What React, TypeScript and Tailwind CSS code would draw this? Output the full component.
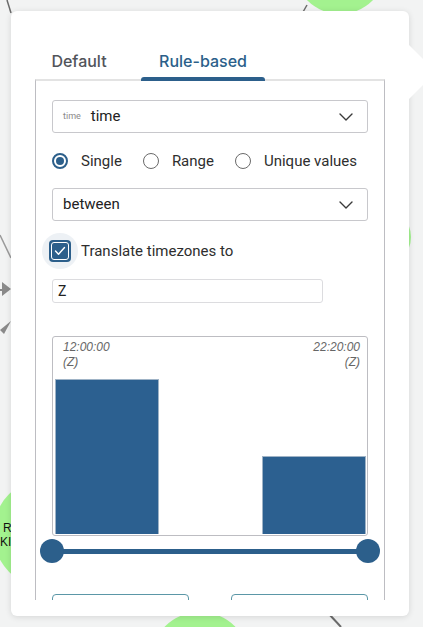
import React from 'react';

const GraphBackdrop = () => (
  <svg className="absolute inset-0" width={423} height={627} viewBox="0 0 423 627">
    {/* edges */}
    <line x1={7} y1={0} x2={11} y2={13} stroke="#6b6b6b" strokeWidth={1.5} />
    <line x1={307} y1={5} x2={303} y2={12} stroke="#6b6b6b" strokeWidth={1.5} />
    <line x1={0} y1={235} x2={11} y2={258} stroke="#9a9a9a" strokeWidth={1.5} />
    <line x1={0} y1={290} x2={6} y2={290} stroke="#8a8a8a" strokeWidth={2} />
    <polygon points="2,282 11,289 2,296" fill="#8a8a8a" />
    <polygon points="0,330 11,321 4,334" fill="#8a8a8a" />
    <line x1={329} y1={614} x2={341} y2={627} stroke="#6b6b6b" strokeWidth={2} />
    {/* nodes */}
    <circle cx={340} cy={-32} r={46} fill="#a3f28f" />
    <circle cx={48} cy={533} r={55} fill="#a3f28f" />
    <circle cx={381} cy={237} r={30} fill="#a3f28f" />
    <circle cx={200} cy={662} r={50} fill="#a3f28f" />
    <text x={3} y={532} fontSize={12} fontFamily="Liberation Sans, sans-serif" fill="#111">R</text>
    <text x={0} y={546} fontSize={12} fontFamily="Liberation Sans, sans-serif" fill="#111">KI</text>
  </svg>
);

const Chevron = () => (
  <svg width={14} height={8} viewBox="0 0 14 8" fill="none">
    <polyline points="1,1 7,7 13,1" stroke="#3a3a3a" strokeWidth={1.4} strokeLinecap="round" strokeLinejoin="round" />
  </svg>
);

const Radio = ({ checked, label }: { checked?: boolean; label: string }) => (
  <label className="flex items-center gap-[13px] whitespace-nowrap">
    {checked ? (
      <span className="w-4 h-4 rounded-full border-2 border-[#2c5f8b] flex items-center justify-center">
        <span className="w-[8px] h-[8px] rounded-full bg-[#2c5f8b]" />
      </span>
    ) : (
      <span className="w-4 h-4 rounded-full border border-[#6a6a6a]" />
    )}
    <span className="text-[15px] text-[#2e2e2e] leading-6">{label}</span>
  </label>
);

const bins = [2, 0, 1];

const App = () => {
  const maxBin = Math.max(...bins);

  return (
    <div className="relative w-[423px] h-[627px] overflow-hidden bg-[#f2f3f3] font-['Roboto','Noto_Sans',sans-serif]">
      <GraphBackdrop />

      {/* Popover panel */}
      <div className="absolute left-[11px] top-[11px] w-[398px] h-[605px] bg-white rounded-[6px] shadow-[0_1px_6px_rgba(0,0,0,0.12)] flex flex-col">
        {/* popover pointer */}
        <svg className="absolute left-[397px] top-[33px]" width={30} height={58} viewBox="0 0 30 58">
          <polygon points="0,0 28,28 0,56" fill="#ffffff" />
        </svg>

        {/* Tabs */}
        <div className="h-[68px] flex items-end pl-[6px] font-['Inter',sans-serif]">
          <button className="w-[124px] h-[30px] text-[16px] font-medium text-[#51545a] leading-6 pb-[6px]">
            Default
          </button>
          <button className="relative w-[124px] h-[30px] text-[16px] font-medium text-[#2b5f8a] leading-6 pb-[6px]">
            Rule-based
            <span className="absolute left-0 right-0 -bottom-[2px] h-[4px] rounded-t-[3px] bg-[#2c5f8b] z-10" />
          </button>
        </div>

        {/* Tab content */}
        <div className="mx-6 h-[521px] border-x border-[#bdbdc2] border-t-2 border-t-[#e3e3e3] overflow-hidden px-4 pt-[19px]">
          {/* field select */}
          <div className="h-[33px] border border-[#c8c8cc] rounded-[3px] flex items-center pl-[10px] pr-[14px]">
            <span className="text-[9px] text-[#8a8a8a] mr-[10px]">time</span>
            <span className="text-[15px] text-[#222]">time</span>
            <span className="ml-auto">
              <Chevron />
            </span>
          </div>

          {/* mode radios */}
          <div className="mt-4 h-6 flex items-center gap-[21px]">
            <Radio checked label="Single" />
            <Radio label="Range" />
            <Radio label="Unique values" />
          </div>

          {/* operator select */}
          <div className="mt-[15px] h-[33px] border border-[#c8c8cc] rounded-[3px] flex items-center pl-[10px] pr-[14px]">
            <span className="text-[15px] text-[#222]">between</span>
            <span className="ml-auto">
              <Chevron />
            </span>
          </div>

          {/* timezone checkbox */}
          <div className="mt-3 -ml-[10px] flex items-center gap-[3px]">
            <span className="w-9 h-9 rounded-full bg-[#edf1f5] flex items-center justify-center">
              <span className="w-[22px] h-[22px] rounded-[4px] bg-[#2c5f8b] p-[2px]">
                <span className="w-full h-full rounded-[3px] border border-white flex items-center justify-center">
                  <svg width={12} height={10} viewBox="0 0 12 10" fill="none">
                    <polyline points="1.5,5 4.5,8.2 10.5,1.5" stroke="#ffffff" strokeWidth={1.4} strokeLinecap="round" strokeLinejoin="round" />
                  </svg>
                </span>
              </span>
            </span>
            <span className="text-[15px] text-[#2e2e2e]">Translate timezones to</span>
          </div>

          <div className="mt-[10px] w-[271px] h-[24px] border border-[#dcdcdf] rounded-[3px] flex items-center pl-[5px] text-[14px] text-[#222]">
            Z
          </div>

          {/* histogram */}
          <div className="relative mt-[33px] h-[200px] border border-[#bdbdc2] rounded-[3px] flex items-end pl-[2px] pr-[1px] pb-[1px]">
            <div className="absolute left-[10px] top-[3px] font-['Liberation_Sans',sans-serif] italic text-[12px] leading-[15px] text-[#666]">
              <div>12:00:00</div>
              <div>(Z)</div>
            </div>
            <div className="absolute right-[7px] top-[3px] text-right font-['Liberation_Sans',sans-serif] italic text-[12px] leading-[15px] text-[#666]">
              <div>22:20:00</div>
              <div>(Z)</div>
            </div>
            {bins.map((b, i) => (
              <div key={i} className="flex-1 flex items-end">
                {b > 0 && (
                  <div
                    className="w-full bg-[#2c6090] border border-[#9fb3c6] border-b-0"
                    style={{ height: Math.round((b / maxBin) * 155) }}
                  />
                )}
              </div>
            ))}
          </div>

          {/* range slider */}
          <div className="relative mt-[3px] h-6 flex items-center">
            <div className="w-full h-[5px] bg-[#2c5f8b]" />
            <span className="absolute -left-3 top-0 w-6 h-6 rounded-full bg-[#2c5f8b]" />
            <span className="absolute -right-3 top-0 w-6 h-6 rounded-full bg-[#2c5f8b]" />
          </div>

          {/* action buttons */}
          <div className="mt-[31px] flex justify-between">
            <button className="w-[137px] h-[32px] border border-[#5b97a7] rounded-[4px]" />
            <button className="w-[137px] h-[32px] border border-[#5b97a7] rounded-[4px]" />
          </div>
        </div>
      </div>
    </div>
  );
};

export default App;
